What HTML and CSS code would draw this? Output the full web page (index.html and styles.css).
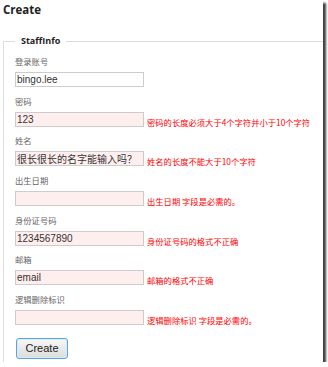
FILE: index.html
```html
<!DOCTYPE html>
<html lang="zh-CN">
<head>
    <meta charset="UTF-8">
    <meta name="viewport" content="width=device-width, initial-scale=1.0">
    <title>Create</title>
    <link rel="stylesheet" href="styles.css">
</head>
<body>
    <div class="shot">
        <h2>Create</h2>
        <form>
            <fieldset>
                <legend>StaffInfo</legend>
                <div class="fields">
                    <div class="field">
                        <label for="account">登录账号</label>
                        <div class="row">
                            <input id="account" type="text" value="bingo.lee">
                        </div>
                    </div>
                    <div class="field">
                        <label for="password">密码</label>
                        <div class="row">
                            <input id="password" class="invalid" type="text" value="123">
                            <span class="error">密码的长度必须大于4个字符并小于10个字符</span>
                        </div>
                    </div>
                    <div class="field">
                        <label for="name">姓名</label>
                        <div class="row">
                            <input id="name" class="invalid" type="text" value="很长很长的名字能输入吗？">
                            <span class="error">姓名的长度不能大于10个字符</span>
                        </div>
                    </div>
                    <div class="field">
                        <label for="birthday">出生日期</label>
                        <div class="row">
                            <input id="birthday" class="invalid" type="text" value="">
                            <span class="error">出生日期 字段是必需的。</span>
                        </div>
                    </div>
                    <div class="field">
                        <label for="idcard">身份证号码</label>
                        <div class="row">
                            <input id="idcard" class="invalid" type="text" value="1234567890">
                            <span class="error">身份证号码的格式不正确</span>
                        </div>
                    </div>
                    <div class="field">
                        <label for="email">邮箱</label>
                        <div class="row">
                            <input id="email" class="invalid" type="text" value="email">
                            <span class="error">邮箱的格式不正确</span>
                        </div>
                    </div>
                    <div class="field">
                        <label for="deleted">逻辑删除标识</label>
                        <div class="row">
                            <input id="deleted" class="invalid" type="text" value="">
                            <span class="error">逻辑删除标识 字段是必需的。</span>
                        </div>
                    </div>
                </div>
                <button type="button" class="submit">Create</button>
            </fieldset>
        </form>
    </div>
</body>
</html>
```

FILE: styles.css
```css
body {
    margin: 0;
    background-color: #fff;
}
.shot {
    width: 323px;
    height: 362px;
    box-sizing: border-box;
    padding: 3px 0 0 3px;
    background-color: #fff;
    overflow: hidden;
    box-shadow: 3px 3px 2px rgba(0, 0, 0, 0.75);
}
h2 {
    margin: 0 0 18px 0;
    font-family: "Open Sans", "DejaVu Sans", sans-serif;
    font-size: 11.5px;
    line-height: 14px;
    font-weight: bold;
    color: #222;
}
form {
    margin: 0;
}
fieldset {
    margin: 0;
    width: 340px;
    padding: 8px 11px 20px 11px;
    border: 1px solid #ddd;
}
legend {
    padding: 0 6px;
    font-family: "Open Sans", "DejaVu Sans", sans-serif;
    font-size: 9px;
    line-height: 12px;
    font-weight: bold;
    color: #222;
}
.fields {
    display: flex;
    flex-direction: column;
    gap: 7.67px;
}
.field label {
    display: block;
    margin-bottom: 5px;
    font-family: "Noto Sans CJK SC", sans-serif;
    font-size: 8.3px;
    line-height: 12px;
    color: #666;
}
.row {
    display: flex;
    align-items: flex-end;
}
input {
    width: 129px;
    height: 15px;
    box-sizing: border-box;
    margin: 0;
    padding: 0 1px;
    border: 1px solid #ccc;
    background-color: #fff;
    font-family: "Liberation Sans", "Noto Sans CJK SC", sans-serif;
    font-size: 10px;
    color: #333;
    outline: none;
}
input.invalid {
    background-color: #ffeeee;
}
.error {
    margin-left: 3px;
    font-family: "Noto Sans CJK SC", sans-serif;
    font-size: 8.3px;
    line-height: 10px;
    color: #ff0000;
    white-space: nowrap;
}
.submit {
    margin-top: 13px;
    margin-left: 1px;
    width: 52px;
    height: 21px;
    padding: 0;
    border: 1px solid #5aa6d8;
    border-radius: 3px;
    background: linear-gradient(#f7f7f7, #dcdcdc);
    box-shadow: inset 0 0 0 1px #d6ecf8;
    font-family: "Liberation Sans", sans-serif;
    font-size: 11px;
    color: #222;
}
```
